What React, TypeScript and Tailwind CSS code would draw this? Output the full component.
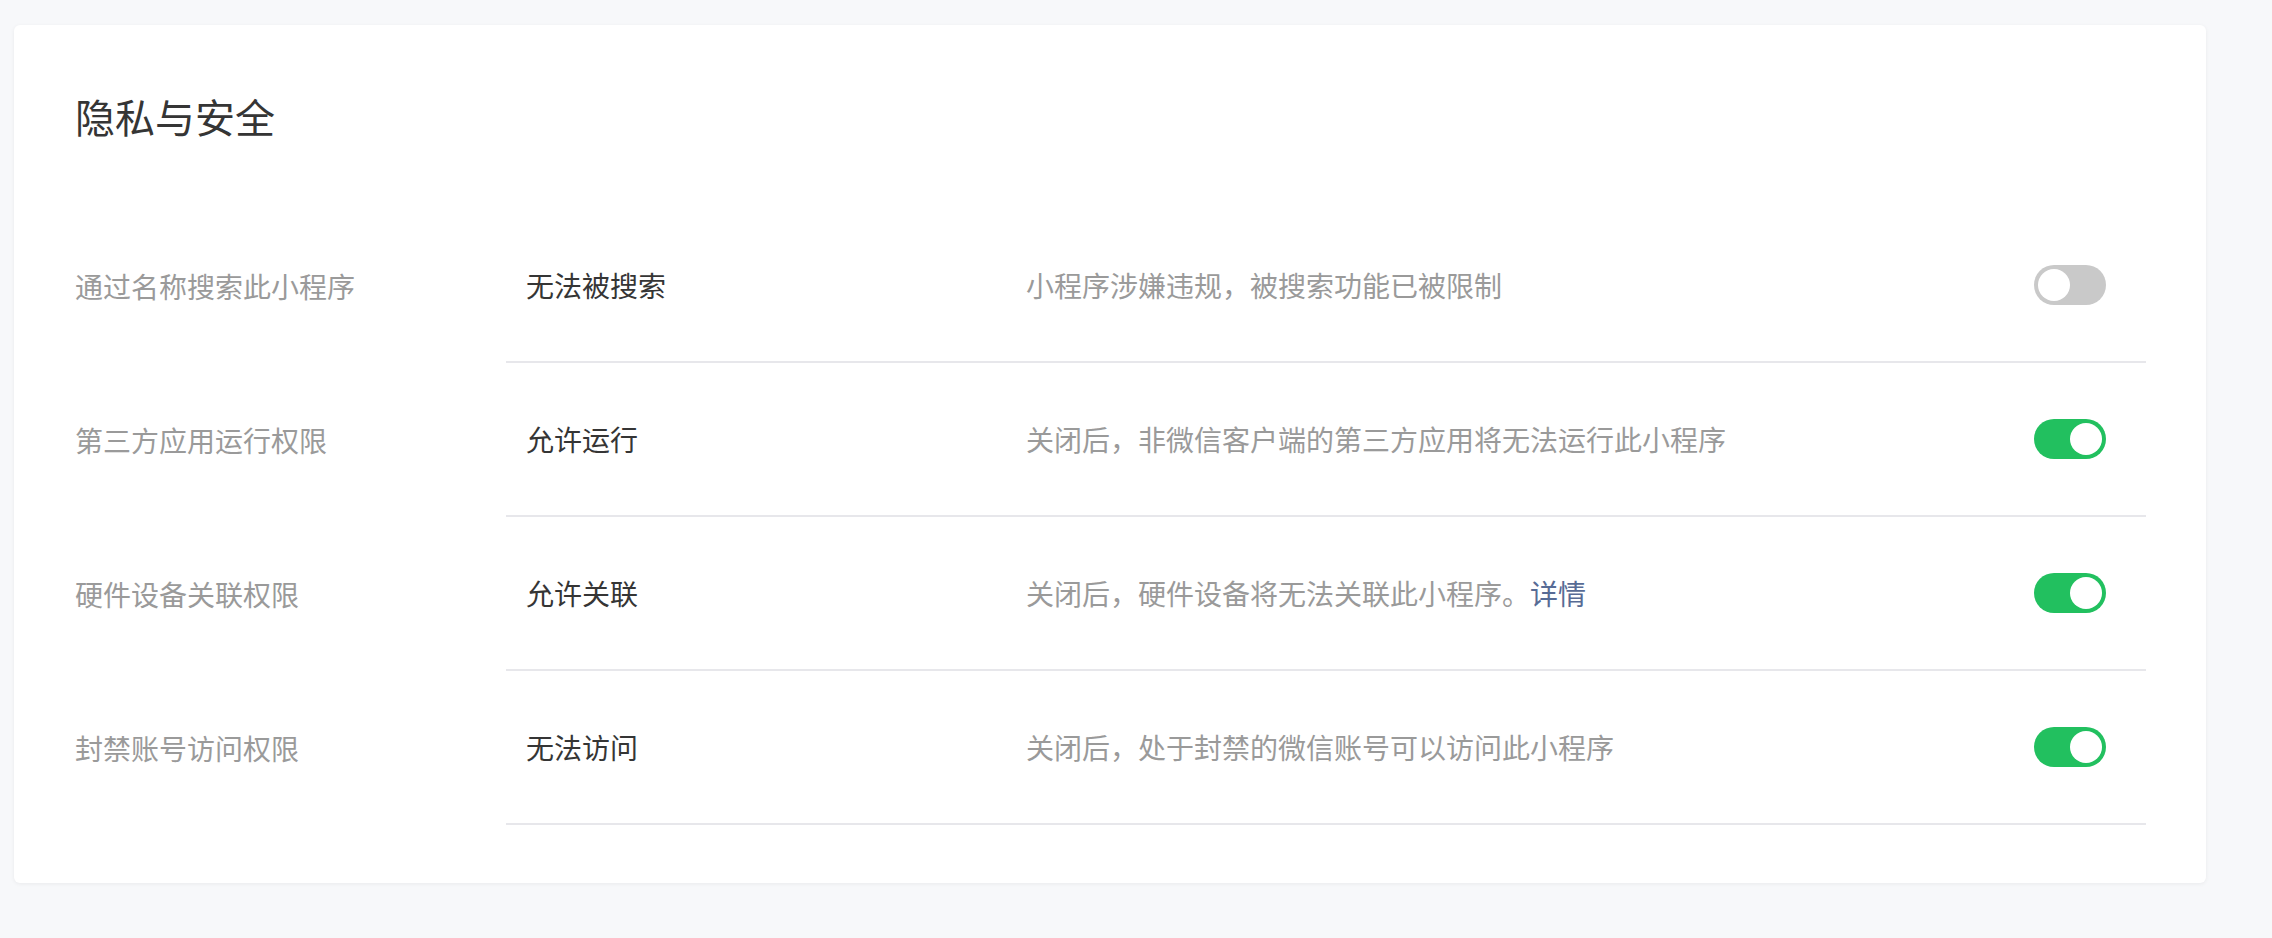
import React, { useState } from "react";

type Setting = {
  label: string;
  value: string;
  desc: string;
  link?: string;
  on: boolean;
};

const settings: Setting[] = [
  {
    label: "通过名称搜索此小程序",
    value: "无法被搜索",
    desc: "小程序涉嫌违规，被搜索功能已被限制",
    on: false,
  },
  {
    label: "第三方应用运行权限",
    value: "允许运行",
    desc: "关闭后，非微信客户端的第三方应用将无法运行此小程序",
    on: true,
  },
  {
    label: "硬件设备关联权限",
    value: "允许关联",
    desc: "关闭后，硬件设备将无法关联此小程序。",
    link: "详情",
    on: true,
  },
  {
    label: "封禁账号访问权限",
    value: "无法访问",
    desc: "关闭后，处于封禁的微信账号可以访问此小程序",
    on: true,
  },
];

function Toggle({ on, onClick }: { on: boolean; onClick: () => void }) {
  return (
    <button
      onClick={onClick}
      className={`flex h-[40px] w-[72px] shrink-0 items-center rounded-full p-[4px] ${
        on ? "justify-end bg-[#22c05f]" : "justify-start bg-[#c9c9c9]"
      }`}
    >
      <span className="block h-[32px] w-[32px] rounded-full bg-white" />
    </button>
  );
}

export default function App() {
  const [states, setStates] = useState<boolean[]>(settings.map((s) => s.on));

  return (
    <div
      className="min-h-[938px] w-full bg-[#f7f8fa] pl-[14px] pt-[25px]"
      style={{ fontFamily: '"Noto Sans CJK SC", "Noto Sans", sans-serif' }}
    >
      <div className="w-[2192px] rounded-[6px] bg-white pb-[58px] pl-[61px] pr-[60px] pt-[63px] shadow-[0_1px_4px_rgba(0,0,0,0.06)]">
        <h1 className="text-[40px] font-normal leading-[56px] text-[#353535]">
          隐私与安全
        </h1>

        <div className="mt-[65px]">
          {settings.map((s, i) => (
            <div key={s.label} className="flex h-[154px] items-stretch">
              <div className="flex w-[431px] shrink-0 items-center text-[28px] text-[#9a9a9a]">
                {s.label}
              </div>
              <div className="flex flex-1 items-center border-b-2 border-[#e7e7eb] pl-[20px] pr-[40px]">
                <div className="w-[500px] shrink-0 text-[28px] text-[#353535]">
                  {s.value}
                </div>
                <div className="flex-1 text-[28px] text-[#9a9a9a]">
                  {s.desc}
                  {s.link && (
                    <a href="#" className="text-[#576b95]">
                      {s.link}
                    </a>
                  )}
                </div>
                <Toggle
                  on={states[i]}
                  onClick={() =>
                    setStates((prev) => prev.map((v, j) => (j === i ? !v : v)))
                  }
                />
              </div>
            </div>
          ))}
        </div>
      </div>
    </div>
  );
}
